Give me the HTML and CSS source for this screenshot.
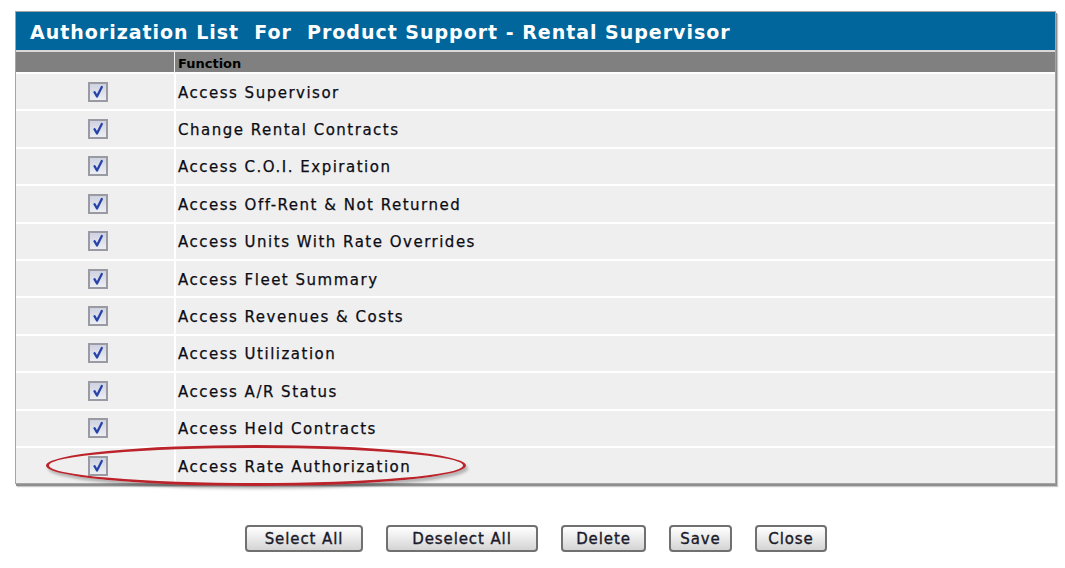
FILE: index.html
```html
<!DOCTYPE html>
<html>
<head>
<meta charset="utf-8">
<link rel="stylesheet" href="styles.css">
</head>
<body>
<div class="page">
  <div class="panel">
    <div class="title">Authorization List&nbsp; For&nbsp; Product Support - Rental Supervisor</div>
    <div class="grid">
      <div class="hcell"></div><div class="hcell fn">Function</div>
      <div class="cell cb"><span class="check"><svg viewBox="0 0 16 16" width="16" height="16"><path d="M4.5 8.2 L7 12.5 L11.8 3" fill="none" stroke="#2742a8" stroke-width="2.3" stroke-linecap="round" stroke-linejoin="round"/></svg></span></div><div class="cell txt">Access Supervisor</div>
      <div class="cell cb"><span class="check"><svg viewBox="0 0 16 16" width="16" height="16"><path d="M4.5 8.2 L7 12.5 L11.8 3" fill="none" stroke="#2742a8" stroke-width="2.3" stroke-linecap="round" stroke-linejoin="round"/></svg></span></div><div class="cell txt">Change Rental Contracts</div>
      <div class="cell cb"><span class="check"><svg viewBox="0 0 16 16" width="16" height="16"><path d="M4.5 8.2 L7 12.5 L11.8 3" fill="none" stroke="#2742a8" stroke-width="2.3" stroke-linecap="round" stroke-linejoin="round"/></svg></span></div><div class="cell txt">Access C.O.I. Expiration</div>
      <div class="cell cb"><span class="check"><svg viewBox="0 0 16 16" width="16" height="16"><path d="M4.5 8.2 L7 12.5 L11.8 3" fill="none" stroke="#2742a8" stroke-width="2.3" stroke-linecap="round" stroke-linejoin="round"/></svg></span></div><div class="cell txt">Access Off-Rent &amp; Not Returned</div>
      <div class="cell cb"><span class="check"><svg viewBox="0 0 16 16" width="16" height="16"><path d="M4.5 8.2 L7 12.5 L11.8 3" fill="none" stroke="#2742a8" stroke-width="2.3" stroke-linecap="round" stroke-linejoin="round"/></svg></span></div><div class="cell txt">Access Units With Rate Overrides</div>
      <div class="cell cb"><span class="check"><svg viewBox="0 0 16 16" width="16" height="16"><path d="M4.5 8.2 L7 12.5 L11.8 3" fill="none" stroke="#2742a8" stroke-width="2.3" stroke-linecap="round" stroke-linejoin="round"/></svg></span></div><div class="cell txt">Access Fleet Summary</div>
      <div class="cell cb"><span class="check"><svg viewBox="0 0 16 16" width="16" height="16"><path d="M4.5 8.2 L7 12.5 L11.8 3" fill="none" stroke="#2742a8" stroke-width="2.3" stroke-linecap="round" stroke-linejoin="round"/></svg></span></div><div class="cell txt">Access Revenues &amp; Costs</div>
      <div class="cell cb"><span class="check"><svg viewBox="0 0 16 16" width="16" height="16"><path d="M4.5 8.2 L7 12.5 L11.8 3" fill="none" stroke="#2742a8" stroke-width="2.3" stroke-linecap="round" stroke-linejoin="round"/></svg></span></div><div class="cell txt">Access Utilization</div>
      <div class="cell cb"><span class="check"><svg viewBox="0 0 16 16" width="16" height="16"><path d="M4.5 8.2 L7 12.5 L11.8 3" fill="none" stroke="#2742a8" stroke-width="2.3" stroke-linecap="round" stroke-linejoin="round"/></svg></span></div><div class="cell txt">Access A/R Status</div>
      <div class="cell cb"><span class="check"><svg viewBox="0 0 16 16" width="16" height="16"><path d="M4.5 8.2 L7 12.5 L11.8 3" fill="none" stroke="#2742a8" stroke-width="2.3" stroke-linecap="round" stroke-linejoin="round"/></svg></span></div><div class="cell txt">Access Held Contracts</div>
      <div class="cell cb last"><span class="check"><svg viewBox="0 0 16 16" width="16" height="16"><path d="M4.5 8.2 L7 12.5 L11.8 3" fill="none" stroke="#2742a8" stroke-width="2.3" stroke-linecap="round" stroke-linejoin="round"/></svg></span></div><div class="cell txt last">Access Rate Authorization</div>
    </div>
    <div class="ring"></div>
  </div>
  <div class="buttons">
    <button class="btn w-sel">Select All</button>
    <button class="btn w-desel">Deselect All</button>
    <button class="btn w-del">Delete</button>
    <button class="btn w-save">Save</button>
    <button class="btn w-close">Close</button>
  </div>
</div>
</body>
</html>
```
FILE: styles.css
```css
html, body { margin: 0; padding: 0; background: #fff; }
body { font-family: "DejaVu Sans", Verdana, sans-serif; }
.page { padding: 11px 0 0 15px; width: 1042px; }
.panel {
  position: relative;
  width: 1039px;
  border: 1px solid #a4a4a4;
  background: #efefef;
  box-shadow: 1px 2px 0 #8e8e8e, 2px 3px 1px #c8c8c8;
}
.title {
  height: 38px;
  background: #00669c;
  color: #fff;
  font-weight: bold;
  font-size: 19px;
  line-height: 40px;
  padding-left: 14px;
  letter-spacing: 0.98px;
  border-bottom: 2px solid #d8d8d8;
  white-space: nowrap;
}
.grid {
  display: grid;
  grid-template-columns: 158px 1fr;
}
.hcell {
  height: 20px;
  background: #808080;
  font-weight: bold;
  font-size: 13px;
  line-height: 23px;
  color: #000;
  border-bottom: 2px solid #fff;
}
.hcell.fn { padding-left: 3px; border-left: 1px solid #efefef; }
.cell {
  box-sizing: border-box;
  height: 37.4px;
  border-bottom: 2px solid #fff;
  display: flex;
  align-items: center;
}
.cell.last { border-bottom: none; height: 35.4px; }
.cb { justify-content: center; padding-left: 6px; }
.txt {
  border-left: 2px solid #fff;
  padding-left: 2px;
  padding-top: 2px;
  font-size: 15px;
  letter-spacing: 1.5px;
  color: #0c0c14;
  -webkit-text-stroke: 0.25px #0c0c14;
}
.check {
  width: 16px;
  height: 16px;
  border: 2px solid #9a9aa2;
  background: linear-gradient(#cfd2e0, #eceef4);
  display: inline-block;
}
.check svg { display: block; }
.ring {
  position: absolute;
  left: 30px;
  top: 433px;
  width: 414px;
  height: 35px;
  border: 3px solid #bb2229;
  border-radius: 50%;
  box-shadow: 2px 3px 3px rgba(0,0,0,0.25);
  pointer-events: none;
}
.buttons {
  display: flex;
  gap: 23px;
  margin-top: 41px;
  padding-left: 230px;
}
.btn {
  height: 27px;
  border: 2px solid #707070;
  border-radius: 4px;
  background: linear-gradient(#ffffff, #ececec 45%, #d4d4d4);
  font-family: "DejaVu Sans", Verdana, sans-serif;
  font-size: 15px;
  letter-spacing: 0.9px;
  color: #1a1a2a;
  -webkit-text-stroke: 0.35px #1a1a2a;
  padding: 0;
}
.w-sel { width: 118px; }
.w-desel { width: 152px; }
.w-del { width: 85px; }
.w-save { width: 63px; }
.w-close { width: 72px; }
```
